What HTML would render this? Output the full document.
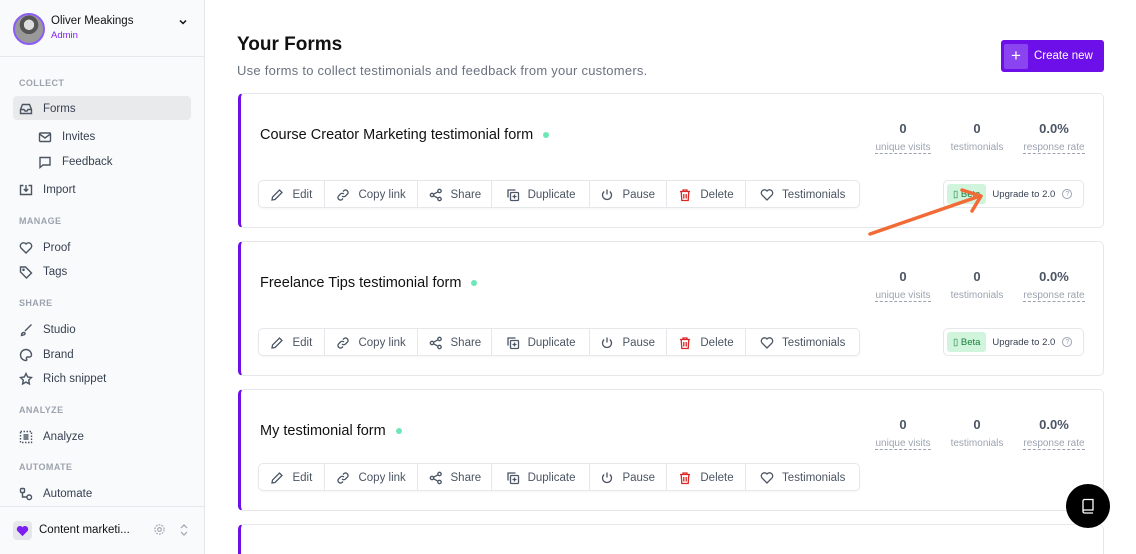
<!DOCTYPE html>
<html><head><meta charset="utf-8"><style>
*{box-sizing:border-box;margin:0;padding:0}
html{width:1136px;height:554px;overflow:hidden}
body{width:1136px;height:554px;overflow:hidden;background:#fff;font-family:"Liberation Sans",sans-serif;position:relative;color:#111827}
.sb{position:absolute;left:0;top:0;width:205px;height:554px;background:#f9fafb;border-right:1px solid #e5e7eb}
.ab{position:absolute}
.sec{position:absolute;left:19px;font-size:9px;font-weight:bold;color:#9ca3af;letter-spacing:.4px}
.it{position:absolute;left:19px;font-size:11.5px;color:#374151;display:flex;align-items:center;gap:10px;height:20px;margin-top:1px}
.it svg{width:14px;height:14px;stroke:#4b5563;fill:none;stroke-width:1.4}
.card{position:absolute;left:238px;width:866px;border:1px solid #e5e7eb;border-left:3px solid #6d0fe8;border-radius:5px;background:#fff}
.ttl{position:absolute;left:19px;font-size:14.5px;color:#111;display:flex;align-items:center;gap:10px}
.dot{width:6px;height:6px;border-radius:50%;background:#6ee7b7}
.st{position:absolute;text-align:center;width:84px}
.st b{display:block;font-size:13px;color:#4b5563;margin-bottom:1px}
.st span{font-size:10px;color:#9ca3af}
.st span.u{border-bottom:1px dashed #9ca3af}
.bar{position:absolute;left:17px;height:28px;width:602px;border:1px solid #e5e7eb;border-radius:5px;display:flex;box-shadow:0 1px 2px rgba(0,0,0,.04)}
.bar div{display:flex;align-items:center;justify-content:center;gap:8px;font-size:11.5px;color:#4b5563;border-right:1px solid #e5e7eb;padding-top:1px}
.bar div:last-child{border-right:none}
.bar svg{width:14px;height:14px;fill:none;stroke:#4b5563;stroke-width:1.3}
.up{position:absolute;left:702px;width:141px;height:28px;border:1px solid #e5e7eb;border-radius:5px;display:flex;align-items:center;font-size:9.5px;color:#374151}
.beta{margin-left:3px;background:#d1f4dc;color:#16803c;height:20px;padding:0 6px;display:flex;align-items:center;border-radius:3px;margin-right:6px;font-size:9.5px}
.q{margin-left:7px;width:10px;height:10px;border:1px solid #9ca3af;border-radius:50%;font-size:7px;color:#9ca3af;text-align:center;line-height:9px}
</style></head><body>
<div class="sb">
 <div class="ab" style="left:13px;top:13px;width:32px;height:32px;border-radius:50%;border:2px solid #8b5cf6;background:radial-gradient(circle at 50% 35%,#ddd 0 22%,#555 23% 40%,#999 41%)"></div>
 <div class="ab" style="left:51px;top:15px;font-size:11.5px;color:#111">Oliver Meakings</div>
 <div class="ab" style="left:51px;top:30px;font-size:9.5px;color:#7c1ff0">Admin</div>
 <svg class="ab" style="left:178px;top:17px" width="10" height="10" viewBox="0 0 10 10"><path d="M2 3.5l3 3 3-3" stroke="#111" stroke-width="1.5" fill="none"/></svg>
 <div class="ab" style="left:0;top:56px;width:204px;border-top:1px solid #e5e7eb"></div>
 <div class="sec" style="top:78px">COLLECT</div>
 <div class="ab" style="left:13px;top:96px;width:178px;height:24px;background:#e9eaec;border-radius:4px"></div>
 <div class="it" style="top:98px"><svg viewBox="0 0 14 14"><path d="M1.5 7.5l2-5h7l2 5v4h-11z M1.5 7.5h3.5l1 1.5h2l1-1.5h3.5"/></svg>Forms</div>
 <div class="it" style="left:38px;top:126px"><svg viewBox="0 0 14 14"><rect x="1.5" y="3" width="11" height="8.5" rx="1"/><path d="M1.5 4l5.5 4 5.5-4"/></svg>Invites</div>
 <div class="it" style="left:38px;top:151px"><svg viewBox="0 0 14 14"><path d="M2 2.5h10v7.5h-7l-3 2.5z"/></svg>Feedback</div>
 <div class="it" style="top:179px"><svg viewBox="0 0 14 14"><path d="M4.5 2.5h-3v9h11v-9h-3M7 2v6M4.8 6l2.2 2.2 2.2-2.2"/></svg>Import</div>
 <div class="sec" style="top:216px">MANAGE</div>
 <div class="it" style="top:237px"><svg viewBox="0 0 14 14"><path d="M7 12L2 7a3 3 0 0 1 5-4a3 3 0 0 1 5 4z"/></svg>Proof</div>
 <div class="it" style="top:261px"><svg viewBox="0 0 14 14"><path d="M1.5 2v5l6 6 5-5-6-6z"/><circle cx="4.5" cy="4.8" r=".6"/></svg>Tags</div>
 <div class="sec" style="top:298px">SHARE</div>
 <div class="it" style="top:319px"><svg viewBox="0 0 14 14"><path d="M12.5 1.5L6 8M2.5 12.5c0-2 1-3 2.5-3s1.5 2-.5 2.5z"/></svg>Studio</div>
 <div class="it" style="top:344px"><svg viewBox="0 0 14 14"><path d="M7 1.5a5.5 5.5 0 1 0 0 11c1 0 1-1 .5-1.8s0-1.7 1-1.7h2a2 2 0 0 0 2-2A5.5 5.5 0 0 0 7 1.5z"/></svg>Brand</div>
 <div class="it" style="top:368px"><svg viewBox="0 0 14 14"><path d="M7 1.5l1.7 3.5 3.8.5-2.8 2.6.7 3.8L7 10.1 3.6 11.9l.7-3.8L1.5 5.5l3.8-.5z"/></svg>Rich snippet</div>
 <div class="sec" style="top:405px">ANALYZE</div>
 <div class="it" style="top:426px"><svg viewBox="0 0 14 14"><rect x="1.5" y="1.5" width="11" height="11" stroke-dasharray="1.5 1.5"/><path d="M4.5 5h5M4.5 7h5M4.5 9h5"/></svg>Analyze</div>
 <div class="sec" style="top:462px">AUTOMATE</div>
 <div class="it" style="top:483px"><svg viewBox="0 0 14 14"><rect x="1.5" y="1.5" width="4" height="4" rx="1"/><rect x="8" y="8" width="4.5" height="4.5" rx="2"/><path d="M3.5 5.5v4.5h4.5"/></svg>Automate</div>
 <div class="ab" style="left:0;top:506px;width:204px;border-top:1px solid #e5e7eb"></div>
 <div class="ab" style="left:13px;top:521px;width:19px;height:19px;border-radius:4px;background:#e5e7eb;display:flex;align-items:center;justify-content:center"><svg width="13" height="12" viewBox="0 0 14 13"><path d="M7 12L1.5 6.5a3.2 3.2 0 0 1 5.5-4a3.2 3.2 0 0 1 5.5 4z" fill="#7c1ff0"/></svg></div>
 <div class="ab" style="left:39px;top:524px;font-size:11.5px;color:#111">Content marketi...</div>
 <svg class="ab" style="left:153px;top:523px" width="13" height="13" viewBox="0 0 14 14"><circle cx="7" cy="7" r="2" fill="none" stroke="#9ca3af" stroke-width="1.2"/><circle cx="7" cy="7" r="5" fill="none" stroke="#9ca3af" stroke-width="1.2" stroke-dasharray="2 1.2"/></svg>
 <svg class="ab" style="left:179px;top:523px" width="10" height="14" viewBox="0 0 10 14"><path d="M2 5l3-3 3 3M2 9l3 3 3-3" stroke="#9ca3af" stroke-width="1.2" fill="none"/></svg>
</div>

<div class="ab" style="left:237px;top:34px;font-size:19px;font-weight:bold;color:#111">Your Forms</div>
<div class="ab" style="left:237px;top:63px;font-size:13px;letter-spacing:.25px;color:#6b7280">Use forms to collect testimonials and feedback from your customers.</div>
<div class="ab" style="left:1001px;top:40px;width:103px;height:32px;background:#6d0fe8;border-radius:3px;color:#fff;font-size:11.5px;display:flex;align-items:center">
 <div style="margin-left:3px;width:24px;height:25px;background:#8b45f0;border-radius:2px;display:flex;align-items:center;justify-content:center;font-size:17px;font-weight:300">+</div><span style="margin-left:6px">Create new</span></div>

<div class="card" style="top:93px;height:135px">
 <div class="ttl" style="top:33px">Course Creator Marketing testimonial form<span class="dot"></span></div>
 <div class="st" style="left:620px;top:27px"><b>0</b><span class="u">unique visits</span></div>
 <div class="st" style="left:694px;top:27px"><b>0</b><span>testimonials</span></div>
 <div class="st" style="left:771px;top:27px"><b>0.0%</b><span class="u">response rate</span></div>
 <div class="bar" style="top:86px">
  <div style="width:66px"><svg viewBox="0 0 14 14"><path d="M2 12l.5-3 7-7 2.5 2.5-7 7z"/></svg>Edit</div>
  <div style="width:94px"><svg viewBox="0 0 14 14"><path d="M6 8a2.5 2.5 0 0 0 3.5 0l2-2a2.5 2.5 0 0 0-3.5-3.5l-1 1M8 6a2.5 2.5 0 0 0-3.5 0l-2 2A2.5 2.5 0 0 0 6 11.5l1-1"/></svg>Copy link</div>
  <div style="width:74px"><svg viewBox="0 0 14 14"><circle cx="3" cy="7" r="1.7"/><circle cx="10.5" cy="3" r="1.7"/><circle cx="10.5" cy="11" r="1.7"/><path d="M4.5 6.2L9 3.8M4.5 7.8L9 10.2"/></svg>Share</div>
  <div style="width:98px"><svg viewBox="0 0 14 14"><rect x="4.5" y="4.5" width="8" height="8" rx="1"/><path d="M2 9.5V2h7.5M8.5 6.5v4M6.5 8.5h4"/></svg>Duplicate</div>
  <div style="width:77px"><svg viewBox="0 0 14 14"><path d="M7 1.5v5M4.2 3.5a4.5 4.5 0 1 0 5.6 0"/></svg>Pause</div>
  <div style="width:80px"><svg viewBox="0 0 14 14" style="stroke:#dc2626"><path d="M2 3.5h10M5 3.5V2h4v1.5M3.2 3.5l.6 9h6.4l.6-9M5.8 6v4.5M8.2 6v4.5"/></svg>Delete</div>
  <div style="width:113px"><svg viewBox="0 0 14 14"><path d="M7 12L2 7a3 3 0 0 1 5-4a3 3 0 0 1 5 4z"/></svg>Testimonials</div>
 </div>
 <div class="up" style="top:86px"><span class="beta">▯ Beta</span>Upgrade to 2.0<span class="q">?</span></div>
</div>

<div class="card" style="top:241px;height:135px">
 <div class="ttl" style="top:33px">Freelance Tips testimonial form<span class="dot"></span></div>
 <div class="st" style="left:620px;top:27px"><b>0</b><span class="u">unique visits</span></div>
 <div class="st" style="left:694px;top:27px"><b>0</b><span>testimonials</span></div>
 <div class="st" style="left:771px;top:27px"><b>0.0%</b><span class="u">response rate</span></div>
 <div class="bar" style="top:86px">
  <div style="width:66px"><svg viewBox="0 0 14 14"><path d="M2 12l.5-3 7-7 2.5 2.5-7 7z"/></svg>Edit</div>
  <div style="width:94px"><svg viewBox="0 0 14 14"><path d="M6 8a2.5 2.5 0 0 0 3.5 0l2-2a2.5 2.5 0 0 0-3.5-3.5l-1 1M8 6a2.5 2.5 0 0 0-3.5 0l-2 2A2.5 2.5 0 0 0 6 11.5l1-1"/></svg>Copy link</div>
  <div style="width:74px"><svg viewBox="0 0 14 14"><circle cx="3" cy="7" r="1.7"/><circle cx="10.5" cy="3" r="1.7"/><circle cx="10.5" cy="11" r="1.7"/><path d="M4.5 6.2L9 3.8M4.5 7.8L9 10.2"/></svg>Share</div>
  <div style="width:98px"><svg viewBox="0 0 14 14"><rect x="4.5" y="4.5" width="8" height="8" rx="1"/><path d="M2 9.5V2h7.5M8.5 6.5v4M6.5 8.5h4"/></svg>Duplicate</div>
  <div style="width:77px"><svg viewBox="0 0 14 14"><path d="M7 1.5v5M4.2 3.5a4.5 4.5 0 1 0 5.6 0"/></svg>Pause</div>
  <div style="width:80px"><svg viewBox="0 0 14 14" style="stroke:#dc2626"><path d="M2 3.5h10M5 3.5V2h4v1.5M3.2 3.5l.6 9h6.4l.6-9M5.8 6v4.5M8.2 6v4.5"/></svg>Delete</div>
  <div style="width:113px"><svg viewBox="0 0 14 14"><path d="M7 12L2 7a3 3 0 0 1 5-4a3 3 0 0 1 5 4z"/></svg>Testimonials</div>
 </div>
 <div class="up" style="top:86px"><span class="beta">▯ Beta</span>Upgrade to 2.0<span class="q">?</span></div>
</div>

<div class="card" style="top:389px;height:122px">
 <div class="ttl" style="top:33px">My testimonial form<span class="dot"></span></div>
 <div class="st" style="left:620px;top:27px"><b>0</b><span class="u">unique visits</span></div>
 <div class="st" style="left:694px;top:27px"><b>0</b><span>testimonials</span></div>
 <div class="st" style="left:771px;top:27px"><b>0.0%</b><span class="u">response rate</span></div>
 <div class="bar" style="top:73px">
  <div style="width:66px"><svg viewBox="0 0 14 14"><path d="M2 12l.5-3 7-7 2.5 2.5-7 7z"/></svg>Edit</div>
  <div style="width:94px"><svg viewBox="0 0 14 14"><path d="M6 8a2.5 2.5 0 0 0 3.5 0l2-2a2.5 2.5 0 0 0-3.5-3.5l-1 1M8 6a2.5 2.5 0 0 0-3.5 0l-2 2A2.5 2.5 0 0 0 6 11.5l1-1"/></svg>Copy link</div>
  <div style="width:74px"><svg viewBox="0 0 14 14"><circle cx="3" cy="7" r="1.7"/><circle cx="10.5" cy="3" r="1.7"/><circle cx="10.5" cy="11" r="1.7"/><path d="M4.5 6.2L9 3.8M4.5 7.8L9 10.2"/></svg>Share</div>
  <div style="width:98px"><svg viewBox="0 0 14 14"><rect x="4.5" y="4.5" width="8" height="8" rx="1"/><path d="M2 9.5V2h7.5M8.5 6.5v4M6.5 8.5h4"/></svg>Duplicate</div>
  <div style="width:77px"><svg viewBox="0 0 14 14"><path d="M7 1.5v5M4.2 3.5a4.5 4.5 0 1 0 5.6 0"/></svg>Pause</div>
  <div style="width:80px"><svg viewBox="0 0 14 14" style="stroke:#dc2626"><path d="M2 3.5h10M5 3.5V2h4v1.5M3.2 3.5l.6 9h6.4l.6-9M5.8 6v4.5M8.2 6v4.5"/></svg>Delete</div>
  <div style="width:113px"><svg viewBox="0 0 14 14"><path d="M7 12L2 7a3 3 0 0 1 5-4a3 3 0 0 1 5 4z"/></svg>Testimonials</div>
 </div>
</div>

<div class="card" style="top:524px;height:30px;border-bottom:none;border-bottom-left-radius:0;border-bottom-right-radius:0"></div>

<svg class="ab" style="left:0;top:0" width="1136" height="554"><path d="M870 234L980 196M962 190L981 196L972 211" stroke="#f26a35" stroke-width="3.5" fill="none" stroke-linecap="round" stroke-linejoin="round"/></svg>

<div class="ab" style="left:1066px;top:484px;width:44px;height:44px;border-radius:50%;background:#000;display:flex;align-items:center;justify-content:center"><svg width="18" height="18" viewBox="0 0 18 18"><path d="M4 15V4a1.5 1.5 0 0 1 1.5-1.5H14V13H5.5A1.5 1.5 0 0 0 4 14.5 1.5 1.5 0 0 0 5.5 16H14" stroke="#fff" stroke-width="1.3" fill="none"/></svg></div>
</body></html>
